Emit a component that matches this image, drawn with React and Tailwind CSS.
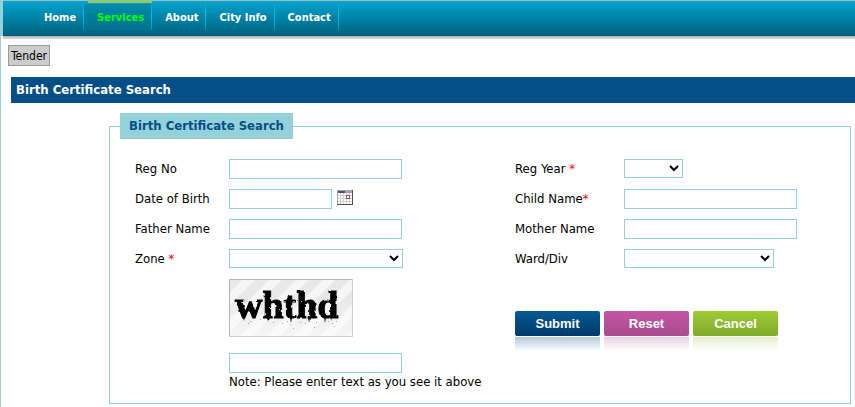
import React from "react";

const navItems = ["Home", "Services", "About", "City Info", "Contact"];

const actions = [
  {
    label: "Submit",
    type: "submit",
    face: "bg-linear-to-b from-[#075a94] to-[#003a6b]",
    shade: "bg-linear-to-b from-[#7fa3c0] to-transparent",
  },
  {
    label: "Reset",
    type: "reset",
    face: "bg-linear-to-b from-[#c455a5] to-[#a94c8c]",
    shade: "bg-linear-to-b from-[#dfb0d2] to-transparent",
  },
  {
    label: "Cancel",
    type: "button",
    face: "bg-linear-to-b from-[#9fca35] to-[#80ab2c]",
    shade: "bg-linear-to-b from-[#d2e3a6] to-transparent",
  },
];

const Label = ({ htmlFor, required, children }) => (
  <label htmlFor={htmlFor} className="leading-5">
    {children}
    {required && <span className="text-[#ff0000]">*</span>}
  </label>
);

const TextBox = ({ id, width = "w-[173px]" }) => (
  <input
    id={id}
    name={id}
    type="text"
    className={`block h-5 border border-[#94d1d9] bg-white px-1 ${width}`}
  />
);

const DropDown = ({ id, width }) => (
  <select
    id={id}
    name={id}
    className={`block h-[19px] border border-[#94d1d9] bg-white ${width}`}
  >
    <option value=""></option>
  </select>
);

const CalendarIcon = () => (
  <svg width="16" height="15" viewBox="0 0 16 15" shapeRendering="crispEdges">
    <rect width="16" height="15" fill="#d0d0d0" />
    {[3, 6, 9, 12].map((y) =>
      [1, 4, 7, 10, 13].map((x) => (
        <rect key={`${x}-${y}`} x={x} y={y} width="2" height="2" fill="#fff" />
      ))
    )}
    <path d="M0 0H16V3H0Z M0 0H1V15H0Z" fill="#a5a5a5" />
    <rect x="1" y="1" width="7" height="2" fill="#4a4a9c" />
    <path d="M15 0H16V15H0V14H15Z" fill="#4d4d4d" />
    <path d="M9 5H13V9H9Z" fill="#a84a4a" />
    <path d="M10 6H12V8H10Z" fill="#fff" />
  </svg>
);

const specks = [
  [19, 44], [21, 42], [31, 40], [44, 43], [53, 44], [58, 42], [61, 45],
  [71, 43], [76, 44], [87, 43], [99, 42], [103, 44], [107, 42], [64, 49],
  [85, 48], [105, 47], [40, 28], [50, 30], [72, 22],
];

const Captcha = () => (
  <svg width="124" height="58" viewBox="0 0 124 58" className="block">
    <defs>
      <pattern
        id="stripes"
        width="19"
        height="19"
        patternUnits="userSpaceOnUse"
        patternTransform="rotate(45)"
      >
        <rect width="19" height="19" fill="#f6f6f6" />
        <rect width="10" height="19" fill="#e8e8e8" />
      </pattern>
      <linearGradient id="fade" x1="0" y1="0" x2="0" y2="1">
        <stop offset="0.3" stopColor="#fff" stopOpacity="0" />
        <stop offset="1" stopColor="#fff" stopOpacity="0.6" />
      </linearGradient>
      <filter id="rough">
        <feTurbulence type="fractalNoise" baseFrequency="0.2" numOctaves="1" />
        <feDisplacementMap
          in="SourceGraphic"
          scale="3"
          xChannelSelector="R"
          yChannelSelector="G"
        />
      </filter>
    </defs>
    <rect width="124" height="58" fill="url(#stripes)" />
    <rect width="124" height="58" fill="url(#fade)" />
    <path d="M0.5 58V0.5H124" fill="none" stroke="#b5b5b5" />
    <path d="M123.5 0V57.5H0" fill="none" stroke="#cfcfcf" />
    <g filter="url(#rough)">
      <text
        x="6"
        y="39"
        fontFamily='"Liberation Serif", "Times New Roman", serif'
        fontSize="38"
        fontWeight="700"
        fill="#000"
        stroke="#000"
        strokeWidth="1"
      >
        whthd
      </text>
      <path
        d="M14 38l1 4 1-4zM38 39l1 4 2-4zM61 39l1 5 1-5zM79 39l1 4 1-4zM95 38l1 6 1-6zM101 38l1 4 1-4z"
        fill="#000"
      />
    </g>
    {specks.map(([x, y]) => (
      <rect key={`${x}-${y}`} x={x} y={y} width="1" height="1" fill="#aaa" />
    ))}
  </svg>
);

const App = () => {
  return (
    <div className="min-h-screen border-l border-[#94d1d9] bg-white font-['DejaVu_Sans_Condensed','DejaVu_Sans',sans-serif] text-[13px] text-black">
      {/* NAV */}
      <header className="border-l-2 border-[#94d1d9]">
        <nav className="flex h-9 items-start border-t border-t-[#a9b8bd] bg-linear-to-b from-[#00a5d2] to-[#00607c] pt-[3px] pl-7 text-[11px] font-bold text-white shadow-[0_1px_0_#b3b3b3,0_3px_0_#d0d0d0]">
          {navItems.map((item) => (
            <a
              key={item}
              href="#"
              className={`relative flex h-[26px] items-center pt-[3px] pr-2 pl-[13px] ${
                item === "Services" ? "bg-[#00788f]/50 text-[#00ff00]" : ""
              }`}
            >
              {item === "Services" && (
                <span className="absolute -top-1 right-0 left-1 h-[3px] bg-[#93c96c]" />
              )}
              {item}
              <span className="absolute top-0 right-0 h-full w-px bg-linear-to-b from-[#00a5d2] via-[#00c0f0] to-[#0090b8]" />
            </a>
          ))}
        </nav>
      </header>

      {/* SUB MENU */}
      <div className="mt-[9px] flex px-[7px]">
        <a
          href="#"
          className="flex h-[21px] items-center border border-[#999999] bg-[#cccccc] px-[2px] text-[12px]"
        >
          Tender
        </a>
      </div>

      <main className="pt-[11px] pl-[10px]">
        <h1 className="bg-[#044f88] px-[5px] leading-[26px] font-bold text-white">
          Birth Certificate Search
        </h1>

        <form className="mt-[10px] mr-1 ml-[98px]">
          <fieldset className="border border-[#94d1d9] px-[25px] pb-3">
            <legend className="-ml-[15px] bg-[#94d1d9] px-[9px] leading-[26px] font-bold text-[#044f88]">
              Birth Certificate Search
            </legend>

            <div className="mt-5 grid grid-cols-[94px_286px_109px_1fr] gap-y-[10px]">
              <Label htmlFor="regNo">Reg No</Label>
              <TextBox id="regNo" />
              <Label htmlFor="regYear" required>
                Reg Year{" "}
              </Label>
              <DropDown id="regYear" width="w-[59px]" />

              <Label htmlFor="dob">Date of Birth</Label>
              <div className="flex gap-[5px]">
                <TextBox id="dob" width="w-[103px]" />
                <button type="button" aria-label="Pick a date" className="h-4">
                  <CalendarIcon />
                </button>
              </div>
              <Label htmlFor="childName" required>
                Child Name
              </Label>
              <TextBox id="childName" />

              <Label htmlFor="fatherName">Father Name</Label>
              <TextBox id="fatherName" />
              <Label htmlFor="motherName">Mother Name</Label>
              <TextBox id="motherName" />

              <Label htmlFor="zone" required>
                Zone{" "}
              </Label>
              <DropDown id="zone" width="w-[174px]" />
              <Label htmlFor="ward">Ward/Div</Label>
              <DropDown id="ward" width="w-[150px]" />

              <div className="col-start-2">
                <Captcha />
                <div className="mt-4">
                  <input
                    id="captcha"
                    name="captcha"
                    type="text"
                    className="block h-5 w-[173px] border border-[#94d1d9] bg-white px-1"
                  />
                  <label htmlFor="captcha" className="block leading-[18px]">
                    Note: Please enter text as you see it above
                  </label>
                </div>
              </div>

              {/* BUTTONS */}
              <div className="col-span-2 flex gap-1 pt-8">
                {actions.map(({ label, type, face, shade }) => (
                  <div key={label} className="w-[85px]">
                    <button
                      type={type}
                      className={`block h-[25px] w-full rounded-xs font-['Liberation_Sans',Arial,sans-serif] text-[13px] font-bold text-white ${face}`}
                    >
                      {label}
                    </button>
                    <div className={`mt-px h-[14px] opacity-60 ${shade}`} />
                  </div>
                ))}
              </div>
            </div>
          </fieldset>
        </form>
      </main>
    </div>
  );
};

export default App;
